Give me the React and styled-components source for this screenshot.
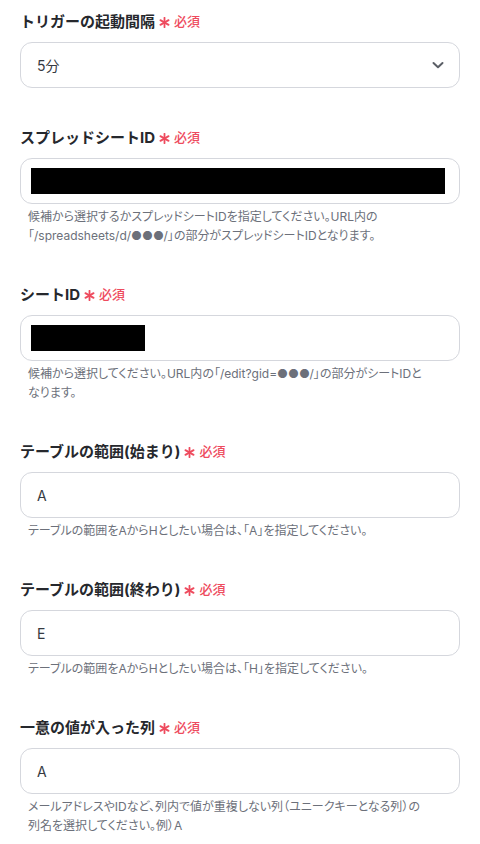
import React from "react";
import styled, { createGlobalStyle } from "styled-components";

const Global = createGlobalStyle`
  html, body { margin: 0; padding: 0; background: #fff; }
  body {
    font-family: "Inter", "Noto Sans CJK JP", sans-serif;
  }
  * { box-sizing: border-box; }
`;

const Page = styled.div`
  padding: 8px 20px 0 20px;
  width: 480px;
  display: flex;
  flex-direction: column;
  gap: 36px;
`;

const Field = styled.div`
  display: flex;
  flex-direction: column;
`;

const Label = styled.div`
  display: flex;
  align-items: center;
  height: 24px;
  font-size: 15px;
  font-weight: 700;
  color: #26282d;
  margin-bottom: 10px;
`;

const Required = styled.span`
  display: inline-flex;
  align-items: center;
  margin-left: 4px;
  color: #ee4b5e;
  font-size: 13px;
  font-weight: 500;
  font-feature-settings: "palt";
`;

const StarIcon = styled.svg`
  margin-right: 4px;
  position: relative;
  top: 2px;
  flex: none;
`;

const Box = styled.div`
  height: 46px;
  border: 1px solid #d5d7dd;
  border-radius: 12px;
  display: flex;
  align-items: center;
  padding: 0 14px 0 16px;
  font-size: 14px;
  color: #363a42;
  justify-content: space-between;
`;

const Redact = styled.div`
  background: #000;
  height: 26px;
  margin-left: -6px;
`;

const Help = styled.div`
  margin-top: 3px;
  padding-left: 8px;
  display: flex;
  flex-direction: column;
  font-size: 12px;
  color: #6c707a;
  font-feature-settings: "palt";
`;

const HelpLine = styled.div`
  height: 19px;
  line-height: 19px;
  white-space: nowrap;
`;

const Chevron = () => (
  <svg width="14" height="14" viewBox="0 0 14 14" fill="none">
    <path d="M2.5 5 L7 9.2 L11.5 5" stroke="#5b5f66" strokeWidth="2" strokeLinecap="round" strokeLinejoin="round" />
  </svg>
);

const Star = () => (
  <StarIcon width="11" height="11" viewBox="0 0 11 11" fill="none">
    <g stroke="#ee4b5e" strokeWidth="1.8" strokeLinecap="round">
      <path d="M5.5 0.8 V10.2" />
      <path d="M1.4 3.1 L9.6 7.9" />
      <path d="M1.4 7.9 L9.6 3.1" />
    </g>
  </StarIcon>
);

const Req = () => (
  <Required>
    <Star />必須
  </Required>
);

const HelpText = ({ lines }) => (
  <Help>
    {lines.map((l, i) => (
      <HelpLine key={i}>{l}</HelpLine>
    ))}
  </Help>
);

export default function App() {
  return (
    <>
      <Global />
      <Page>
        <Field>
          <Label>トリガーの起動間隔<Req /></Label>
          <Box>
            <span>5分</span>
            <Chevron />
          </Box>
        </Field>
        <Field>
          <Label>スプレッドシートID<Req /></Label>
          <Box>
            <Redact style={{ width: 415 }} />
          </Box>
          <HelpText
            lines={[
              "候補から選択するかスプレッドシートIDを指定してください。URL内の",
              "「/spreadsheets/d/●●●/」の部分がスプレッドシートIDとなります。",
            ]}
          />
        </Field>
        <Field>
          <Label>シートID<Req /></Label>
          <Box>
            <Redact style={{ width: 114 }} />
          </Box>
          <HelpText
            lines={[
              "候補から選択してください。URL内の「/edit?gid=●●●/」の部分がシートIDと",
              "なります。",
            ]}
          />
        </Field>
        <Field>
          <Label>テーブルの範囲(始まり)<Req /></Label>
          <Box><span>A</span></Box>
          <HelpText lines={["テーブルの範囲をAからHとしたい場合は、「A」を指定してください。"]} />
        </Field>
        <Field>
          <Label>テーブルの範囲(終わり)<Req /></Label>
          <Box><span>E</span></Box>
          <HelpText lines={["テーブルの範囲をAからHとしたい場合は、「H」を指定してください。"]} />
        </Field>
        <Field>
          <Label>一意の値が入った列<Req /></Label>
          <Box><span>A</span></Box>
          <HelpText
            lines={[
              "メールアドレスやIDなど、列内で値が重複しない列（ユニークキーとなる列）の",
              "列名を選択してください。例）A",
            ]}
          />
        </Field>
      </Page>
    </>
  );
}
